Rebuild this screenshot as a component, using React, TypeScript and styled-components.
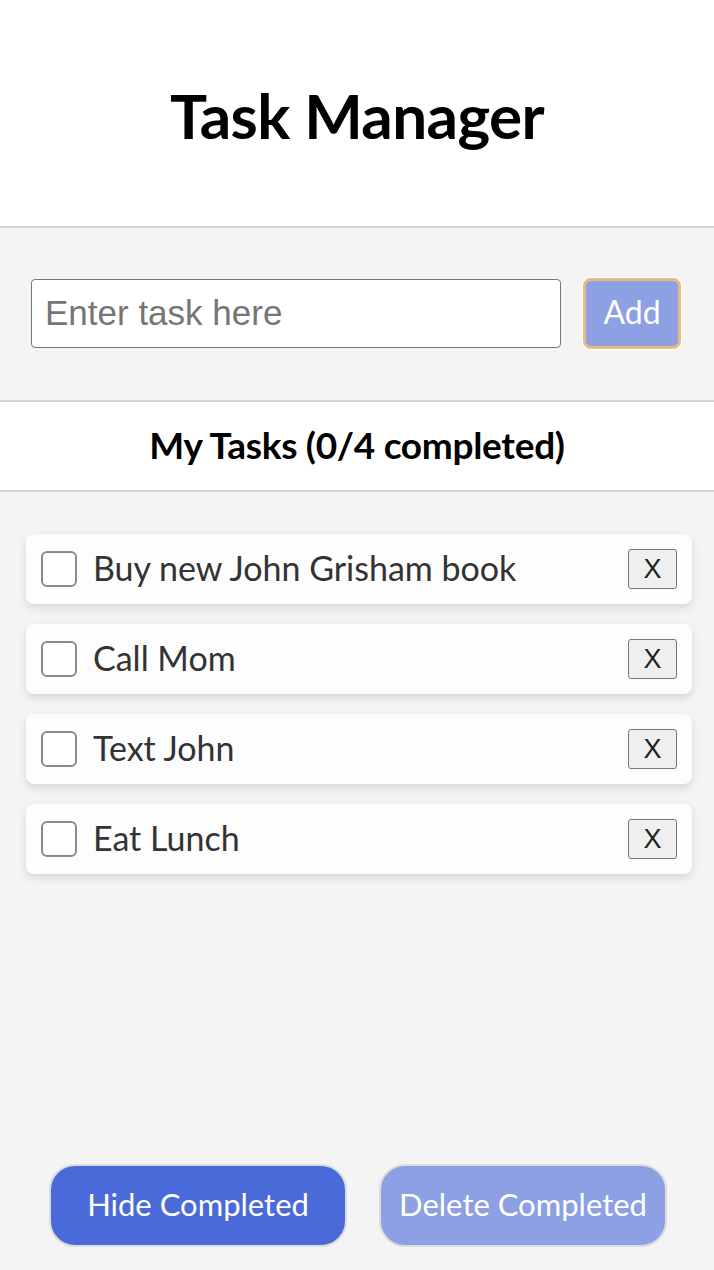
import React, { useState } from "react";
import styled, { createGlobalStyle } from "styled-components";

const GlobalStyle = createGlobalStyle`
  html, body {
    margin: 0;
    padding: 0;
    background: #f4f4f4;
  }
  body {
    font-family: "Lato", "Noto Sans", sans-serif;
  }
  * { box-sizing: border-box; }
`;

const Page = styled.div`
  min-height: 100vh;
  display: flex;
  flex-direction: column;
  background: #f4f4f4;
`;

const Header = styled.header`
  height: 228px;
  background: #ffffff;
  border-bottom: 2px solid #d3d3d3;
  display: flex;
  align-items: center;
  justify-content: center;
  padding-top: 4px;
`;

const Title = styled.h1`
  margin: 0;
  font-size: 62px;
  font-weight: 700;
  color: #000;
  letter-spacing: -0.6px;
`;

const InputSection = styled.form`
  height: 174px;
  display: flex;
  align-items: center;
  gap: 22px;
  padding: 0 31px 2px;
  border-bottom: 2px solid #d3d3d3;
`;

const TaskInput = styled.input`
  width: 530px;
  height: 69px;
  border: 1px solid #767676;
  border-radius: 4px;
  background: #fff;
  padding: 0 13px;
  font-family: "Liberation Sans", Arial, sans-serif;
  font-size: 35px;
  color: #333;
  &::placeholder { color: #757575; }
`;

const AddButton = styled.button`
  width: 98px;
  height: 71px;
  background: #8da0e4;
  border: 3px solid #e3bc7f;
  box-shadow: 0 0 0 1px #ffffff;
  border-radius: 8px;
  color: #fff;
  font-family: "Lato", "Noto Sans", sans-serif;
  font-size: 32px;
  padding: 0 0 3px;
`;

const TasksHeader = styled.div`
  height: 90px;
  background: #fff;
  border-bottom: 2px solid #d3d3d3;
  display: flex;
  align-items: center;
  justify-content: center;
  font-size: 37px;
  font-weight: 700;
  color: #000;
  letter-spacing: -0.3px;
  padding-bottom: 4px;
`;

const List = styled.ul`
  list-style: none;
  margin: 0;
  padding: 42px 22px 0 26px;
  display: flex;
  flex-direction: column;
  gap: 20px;
  flex: 1;
`;

const Card = styled.li`
  height: 70px;
  background: #fdfdfd;
  border-radius: 8px;
  box-shadow: 0 4px 8px rgba(0, 0, 0, 0.12);
  display: flex;
  align-items: center;
  padding: 0 15px;
  gap: 16px;
`;

const Check = styled.input`
  appearance: none;
  margin: 0;
  width: 36px;
  height: 36px;
  border: 2px solid #8a8a8a;
  border-radius: 6px;
  background: #fff;
  flex-shrink: 0;
`;

const TaskText = styled.span`
  flex: 1;
  font-size: 34px;
  color: #333;
  padding-bottom: 4px;
`;

const RemoveButton = styled.button`
  width: 49px;
  height: 40px;
  background: #efefef;
  border: 1px solid #767676;
  border-radius: 3px;
  font-family: "Liberation Sans", Arial, sans-serif;
  font-size: 27px;
  color: #222;
  padding: 0;
  display: flex;
  align-items: center;
  justify-content: center;
`;

const Footer = styled.div`
  display: flex;
  justify-content: center;
  gap: 32px;
  padding: 0 0 23px 2px;
`;

const FooterButton = styled.button<{ $variant: "primary" | "muted"; $w: number }>`
  width: ${(p) => p.$w}px;
  height: 83px;
  border-radius: 26px;
  border: 2px solid #dcdcdc;
  background: ${(p) => (p.$variant === "primary" ? "#4a6ad9" : "#8ca0e3")};
  color: #fff;
  font-family: "Lato", "Noto Sans", sans-serif;
  font-size: 31px;
  padding: 0 0 3px;
`;

const initialTasks = [
  "Buy new John Grisham book",
  "Call Mom",
  "Text John",
  "Eat Lunch",
];

export default function App() {
  const [tasks] = useState(initialTasks);
  return (
    <>
      <GlobalStyle />
      <Page>
        <Header>
          <Title>Task Manager</Title>
        </Header>
        <InputSection onSubmit={(e) => e.preventDefault()}>
          <TaskInput placeholder="Enter task here" />
          <AddButton type="submit">Add</AddButton>
        </InputSection>
        <TasksHeader>My Tasks (0/{tasks.length} completed)</TasksHeader>
        <List>
          {tasks.map((t) => (
            <Card key={t}>
              <Check type="checkbox" />
              <TaskText>{t}</TaskText>
              <RemoveButton>X</RemoveButton>
            </Card>
          ))}
        </List>
        <Footer>
          <FooterButton $variant="primary" $w={298}>Hide Completed</FooterButton>
          <FooterButton $variant="muted" $w={288}>Delete Completed</FooterButton>
        </Footer>
      </Page>
    </>
  );
}
